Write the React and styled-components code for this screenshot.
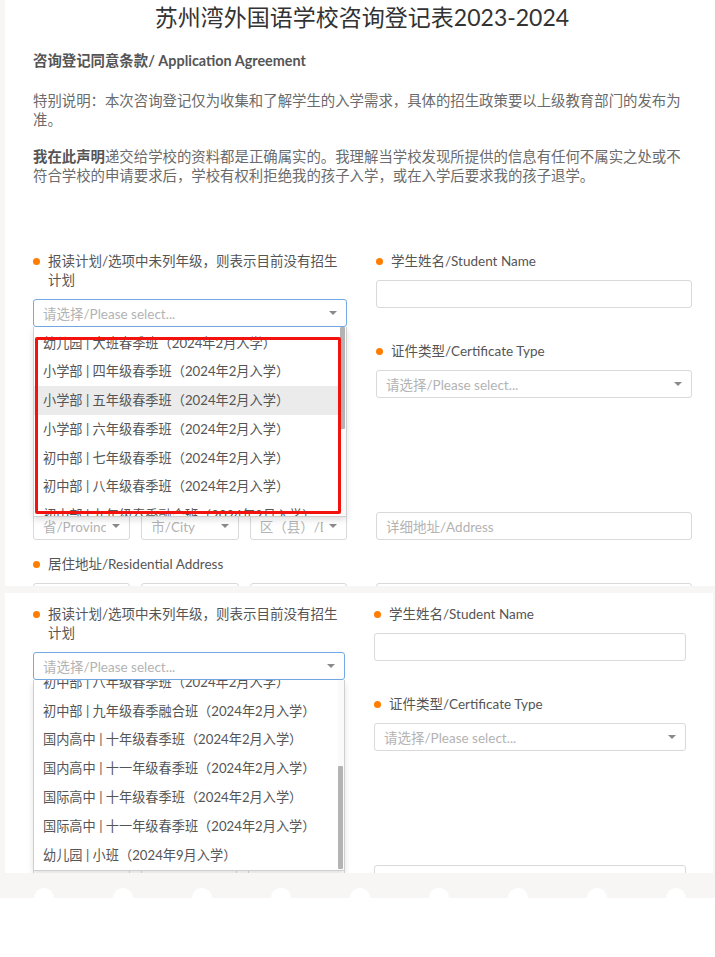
import styled, { createGlobalStyle } from "styled-components";

const GlobalStyle = createGlobalStyle`
  html, body {
    margin: 0;
    padding: 0;
    background: #fff;
  }
  body {
    font-family: Lato, "Noto Sans CJK SC", sans-serif;
    -webkit-font-smoothing: antialiased;
  }
  * { box-sizing: border-box; }
`;

const OPTIONS = [
  "幼儿园 | 大班春季班（2024年2月入学）",
  "小学部 | 四年级春季班（2024年2月入学）",
  "小学部 | 五年级春季班（2024年2月入学）",
  "小学部 | 六年级春季班（2024年2月入学）",
  "初中部 | 七年级春季班（2024年2月入学）",
  "初中部 | 八年级春季班（2024年2月入学）",
  "初中部 | 九年级春季融合班（2024年2月入学）",
  "国内高中 | 十年级春季班（2024年2月入学）",
  "国内高中 | 十一年级春季班（2024年2月入学）",
  "国际高中 | 十年级春季班（2024年2月入学）",
  "国际高中 | 十一年级春季班（2024年2月入学）",
  "幼儿园 | 小班（2024年9月入学）",
];

const ITEM_H = 28.8;
const LIST_PAD = 2;

// 전체 페이지 (베이지 배경)
const Page = styled.div`
  width: 715px;
  background: #f7f6f4;
  display: flex;
  flex-direction: column;
`;

const Sheets = styled.div`
  padding-left: 5px;
  display: flex;
  flex-direction: column;
  gap: 7px;
`;

// 스크린샷 한 장
const Panel = styled.section`
  background: #fff;
  height: ${(p) => p.$height}px;
  margin-right: ${(p) => p.$inset || 0}px;
  padding-top: ${(p) => p.$padTop}px;
  overflow: hidden;
`;

const Title = styled.h1`
  margin: 0;
  padding: 2px 0 0 4px;
  text-align: center;
  font-size: 23px;
  line-height: 30px;
  font-weight: 400;
  color: #333;
`;

const Intro = styled.div`
  padding-left: 28px;
  width: 680px;
`;

const SectionHeading = styled.h2`
  margin: 18.5px 0 0;
  font-size: 14.4px;
  line-height: 19px;
  font-weight: 700;
  color: #555;
`;

const Paragraph = styled.p`
  margin: ${(p) => p.$gap}px 0 0;
  width: 652px;
  font-size: 14.4px;
  line-height: 19px;
  color: #6b6b6b;

  strong {
    font-weight: 700;
    color: #555;
  }
`;

const FormBody = styled.div`
  padding-left: 28px;
  margin-top: ${(p) => p.$top || 0}px;
`;

const Row = styled.div`
  display: grid;
  grid-template-columns: ${(p) => p.$cols[0]}px ${(p) => p.$cols[1]}px;
  column-gap: 29px;
  align-items: start;
  margin-top: ${(p) => p.$gap || 0}px;
`;

const Field = styled.div`
  display: flex;
  flex-direction: column;
  gap: 9px;
`;

const Label = styled.div`
  display: flex;
  gap: 8px;
  min-height: 19px;
  font-size: 13.5px;
  line-height: 19px;
  color: #555;
`;

const Dot = styled.span`
  flex-shrink: 0;
  width: 7px;
  height: 7px;
  margin-top: 6px;
  border-radius: 50%;
  background: #ff7d00;
`;

const LabelText = styled.span`
  flex: 1;
`;

const Box = styled.div`
  height: 28px;
  border: 1px solid ${(p) => (p.$focused ? "#73a9e6" : "#d9d9d9")};
  border-radius: 3px;
  background: #fff;
  padding: 0 9px;
  display: flex;
  align-items: center;
  font-size: 13.5px;
  color: #b3b3b3;
  white-space: nowrap;
`;

const BoxText = styled.span`
  overflow: hidden;
  width: ${(p) => (p.$clip ? `${p.$clip}px` : "auto")};
  flex-shrink: 0;
`;

const Caret = styled.span`
  margin-left: auto;
  width: 0;
  height: 0;
  border-left: 4px solid transparent;
  border-right: 4px solid transparent;
  border-top: 4px solid #8a8a8a;
`;

const SelectWrap = styled.div`
  position: relative;
`;

// 펼쳐진 드롭다운
const Dropdown = styled.div`
  position: absolute;
  top: 100%;
  left: 0;
  right: 0;
  height: ${(p) => p.$height}px;
  z-index: 3;
  background: #fff;
  border: 1px solid #cfcfcf;
  border-top: none;
  box-shadow: 0 3px 6px rgba(0, 0, 0, 0.12);
  display: flex;
`;

const OptionViewport = styled.div`
  flex: 1;
  overflow: hidden;
`;

const OptionList = styled.div`
  padding-top: ${LIST_PAD}px;
`;

const Option = styled.div`
  height: ${ITEM_H}px;
  line-height: ${ITEM_H}px;
  padding-left: 9px;
  font-size: 13.2px;
  color: #555;
  white-space: nowrap;
  background: ${(p) => (p.$active ? "#ebebeb" : "transparent")};
`;

const ScrollTrack = styled.div`
  width: 6px;
  padding-right: 1px;
  background: #fafafa;
`;

const ScrollThumb = styled.div`
  width: 5px;
  background: #b4b4b4;
  border-radius: 1px;
`;

// 빨간 표시 상자
const Annotation = styled.div`
  position: absolute;
  top: 10px;
  left: 1px;
  width: 306px;
  height: 177px;
  border: 3px solid #f2120e;
  border-radius: 2px;
`;

const AddressGroup = styled.div`
  display: grid;
  grid-template-columns: repeat(3, 1fr);
  gap: 11px;
`;

// 아래 찢어진 가장자리
const TornEdge = styled.div`
  height: 25px;
  background:
    radial-gradient(circle at 50% 100%, #fff 9.5px, transparent 10.5px) 4.5px 0 / 79px 25px repeat-x,
    #f7f6f4;
`;

function Select({ text, focused, clip }) {
  return (
    <Box $focused={focused}>
      <BoxText $clip={clip}>{text}</BoxText>
      <Caret />
    </Box>
  );
}

function FieldLabel({ children }) {
  return (
    <Label>
      <Dot />
      <LabelText>{children}</LabelText>
    </Label>
  );
}

function PlanDropdown({ height, scrollToEnd, hovered, annotate }) {
  const inner = height - 1;
  const total = LIST_PAD + OPTIONS.length * ITEM_H;
  const scroll = scrollToEnd ? total - inner : 0;
  const thumbH = (inner / total) * inner;
  const thumbTop = (scroll / total) * inner;

  return (
    <Dropdown $height={height}>
      <OptionViewport>
        <OptionList style={{ marginTop: -scroll }}>
          {OPTIONS.map((o, i) => (
            <Option key={i} $active={i === hovered}>
              {o}
            </Option>
          ))}
        </OptionList>
      </OptionViewport>
      <ScrollTrack>
        <ScrollThumb style={{ height: thumbH, marginTop: thumbTop }} />
      </ScrollTrack>
      {annotate && <Annotation />}
    </Dropdown>
  );
}

function AddressRow({ cols, gap, label }) {
  return (
    <Row $cols={cols} $gap={gap}>
      <Field>
        <FieldLabel>{label}</FieldLabel>
        <AddressGroup>
          <Select text="省/Province" clip={63} />
          <Select text="市/City" clip={63} />
          <Select text="区（县）/District" clip={63} />
        </AddressGroup>
      </Field>
      <Field>
        <Label />
        <Box>
          <BoxText>详细地址/Address</BoxText>
        </Box>
      </Field>
    </Row>
  );
}

function ApplicationForm({ cols, top, dropdown }) {
  return (
    <FormBody $top={top}>
      <Row $cols={cols}>
        <Field>
          <FieldLabel>报读计划/选项中未列年级，则表示目前没有招生计划</FieldLabel>
          <SelectWrap>
            <Select text="请选择/Please select..." focused />
            <PlanDropdown {...dropdown} />
          </SelectWrap>
        </Field>
        <Field>
          <FieldLabel>学生姓名/Student Name</FieldLabel>
          <Box />
        </Field>
      </Row>
      <Row $cols={cols} $gap={15}>
        <Field>
          <FieldLabel>出生日期/Date of Birth</FieldLabel>
          <Box />
        </Field>
        <Field>
          <FieldLabel>证件类型/Certificate Type</FieldLabel>
          <Select text="请选择/Please select..." />
        </Field>
      </Row>
      <AddressRow cols={cols} gap={86} label="户籍地址/Household Address" />
      <AddressRow cols={cols} gap={15} label="居住地址/Residential Address" />
    </FormBody>
  );
}

export default function App() {
  return (
    <>
      <GlobalStyle />
      <Page>
        <Sheets>
          <Panel $height={586} $padTop={0}>
            <Title>苏州湾外国语学校咨询登记表2023-2024</Title>
            <Intro>
              <SectionHeading>咨询登记同意条款/ Application Agreement</SectionHeading>
              <Paragraph $gap={21}>
                特别说明：本次咨询登记仅为收集和了解学生的入学需求，具体的招生政策要以上级教育部门的发布为准。
              </Paragraph>
              <Paragraph $gap={18}>
                <strong>我在此声明</strong>
                递交给学校的资料都是正确属实的。我理解当学校发现所提供的信息有任何不属实之处或不符合学校的申请要求后，学校有权利拒绝我的孩子入学，或在入学后要求我的孩子退学。
              </Paragraph>
            </Intro>
            <ApplicationForm
              cols={[314, 316]}
              top={67}
              dropdown={{ height: 190, hovered: 2, annotate: true }}
            />
          </Panel>
          <Panel $height={280} $padTop={11.5} $inset={2}>
            <ApplicationForm
              cols={[312, 312]}
              dropdown={{ height: 191, scrollToEnd: true }}
            />
          </Panel>
        </Sheets>
        <TornEdge />
      </Page>
    </>
  );
}
